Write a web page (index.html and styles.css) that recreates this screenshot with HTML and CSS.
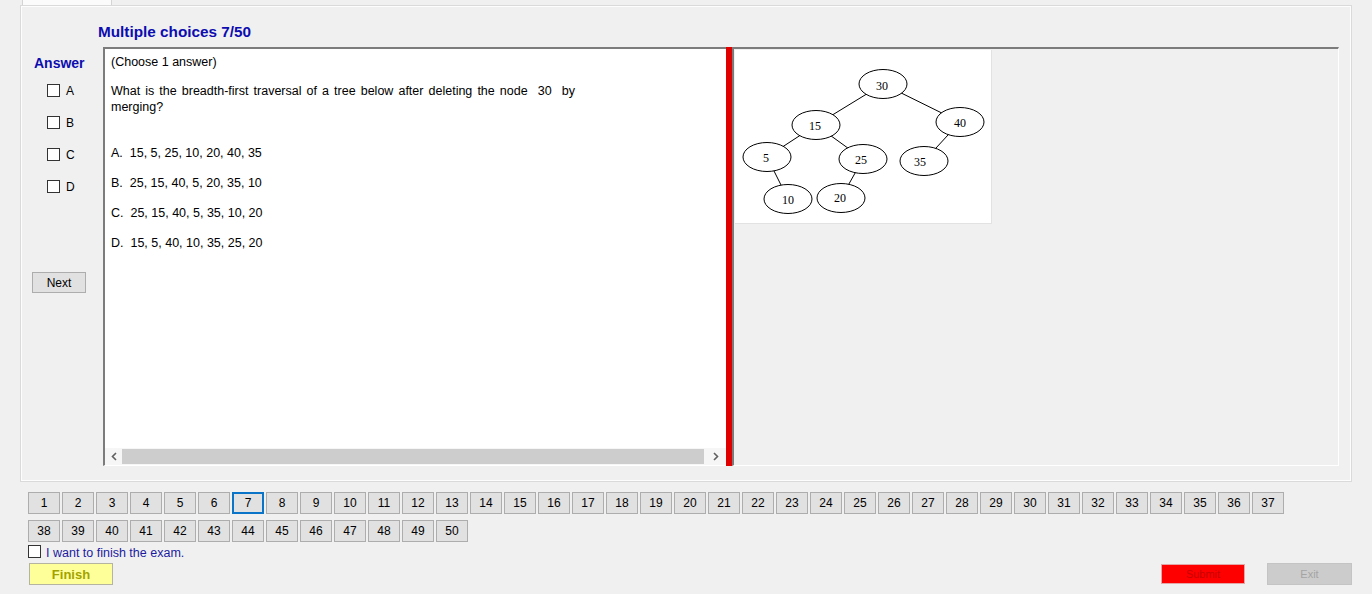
FILE: index.html
```html
<!DOCTYPE html>
<html>
<head>
<meta charset="utf-8">
<link rel="stylesheet" href="styles.css">
</head>
<body>
<div class="tabstrip"><div class="tab"></div></div>
<div class="tabpage">
  <div class="title">Multiple choices 7/50</div>
  <div class="main">
    <div class="answer-col">
      <div class="answer-label">Answer</div>
      <div class="opt first"><span class="cb"></span><span>A</span></div>
      <div class="opt"><span class="cb"></span><span>B</span></div>
      <div class="opt"><span class="cb"></span><span>C</span></div>
      <div class="opt"><span class="cb"></span><span>D</span></div>
      <div class="btn next">Next</div>
    </div>
    <div class="qbox">
      <div class="qtext">
        <div class="l choose">(Choose 1 answer)</div>
        <div class="l question">What is the breadth-first traversal of a tree below after deleting the node &nbsp;30 &nbsp;by<br>merging?</div>
        <div class="l ans">A.&nbsp; 15, 5, 25, 10, 20, 40, 35</div>
        <div class="l ans">B.&nbsp; 25, 15, 40, 5, 20, 35, 10</div>
        <div class="l ans">C.&nbsp; 25, 15, 40, 5, 35, 10, 20</div>
        <div class="l ans">D.&nbsp; 15, 5, 40, 10, 35, 25, 20</div>
      </div>
      <div class="hscroll">
        <div class="arrow"><svg width="8" height="9" viewBox="0 0 8 9"><path d="M6 1 L2.5 4.5 L6 8" fill="none" stroke="#606060" stroke-width="1.6"/></svg></div>
        <div class="thumb"></div>
        <div class="arrow right"><svg width="8" height="9" viewBox="0 0 8 9"><path d="M2 1 L5.5 4.5 L2 8" fill="none" stroke="#606060" stroke-width="1.6"/></svg></div>
      </div>
    </div>
    <div class="splitter"></div>
    <div class="imgpanel">
      <div class="tree">
        <svg width="257" height="174" viewBox="0 0 257 174">
          <g stroke="#000" stroke-width="1">
            <line x1="148" y1="34" x2="81" y2="75"/>
            <line x1="148" y1="34" x2="225" y2="72"/>
            <line x1="81" y1="75" x2="32" y2="107"/>
            <line x1="81" y1="75" x2="128" y2="109"/>
            <line x1="225" y1="72" x2="189" y2="111"/>
            <line x1="32" y1="107" x2="53" y2="149"/>
            <line x1="128" y1="109" x2="106" y2="148"/>
          </g>
          <g fill="#fff" stroke="#000" stroke-width="1">
            <ellipse cx="148" cy="34" rx="24" ry="14.5"/>
            <ellipse cx="81" cy="75" rx="24" ry="14.5"/>
            <ellipse cx="225" cy="72" rx="24" ry="14.5"/>
            <ellipse cx="32" cy="107" rx="24" ry="14.5"/>
            <ellipse cx="128" cy="109" rx="24" ry="14.5"/>
            <ellipse cx="189" cy="111" rx="24" ry="14.5"/>
            <ellipse cx="53" cy="149" rx="24" ry="14.5"/>
            <ellipse cx="106" cy="148" rx="24" ry="14.5"/>
          </g>
          <g class="tlabels" text-anchor="middle">
            <text x="147" y="40">30</text>
            <text x="80" y="80">15</text>
            <text x="225" y="77">40</text>
            <text x="31" y="112">5</text>
            <text x="126" y="114">25</text>
            <text x="185" y="116">35</text>
            <text x="53" y="154">10</text>
            <text x="105" y="152">20</text>
          </g>
        </svg>
      </div>
    </div>
  </div>
</div>
<div class="nav">
  <div class="row">
    <div class="btn num">1</div><div class="btn num">2</div><div class="btn num">3</div><div class="btn num">4</div><div class="btn num">5</div><div class="btn num">6</div><div class="btn num current">7</div><div class="btn num">8</div><div class="btn num">9</div><div class="btn num">10</div><div class="btn num">11</div><div class="btn num">12</div><div class="btn num">13</div><div class="btn num">14</div><div class="btn num">15</div><div class="btn num">16</div><div class="btn num">17</div><div class="btn num">18</div><div class="btn num">19</div><div class="btn num">20</div><div class="btn num">21</div><div class="btn num">22</div><div class="btn num">23</div><div class="btn num">24</div><div class="btn num">25</div><div class="btn num">26</div><div class="btn num">27</div><div class="btn num">28</div><div class="btn num">29</div><div class="btn num">30</div><div class="btn num">31</div><div class="btn num">32</div><div class="btn num">33</div><div class="btn num">34</div><div class="btn num">35</div><div class="btn num">36</div><div class="btn num">37</div>
  </div>
  <div class="row">
    <div class="btn num">38</div><div class="btn num">39</div><div class="btn num">40</div><div class="btn num">41</div><div class="btn num">42</div><div class="btn num">43</div><div class="btn num">44</div><div class="btn num">45</div><div class="btn num">46</div><div class="btn num">47</div><div class="btn num">48</div><div class="btn num">49</div><div class="btn num">50</div>
  </div>
</div>
<div class="finish-check"><span class="cb"></span><span class="fc-text">I want to finish the exam.</span></div>
<div class="bottom">
  <div class="btn finish">Finish</div>
  <div class="right-btns">
    <div class="btn submit">Submit</div>
    <div class="btn exit">Exit</div>
  </div>
</div>
</body>
</html>
```

FILE: styles.css
```css
html, body {
  margin: 0;
  padding: 0;
}
body {
  width: 1372px;
  height: 594px;
  overflow: hidden;
  background: #f0f0f0;
  font-family: "Liberation Sans", Arial, sans-serif;
  font-size: 12px;
  color: #000;
}
.tabstrip {
  height: 5px;
  padding-left: 22px;
}
.tab {
  width: 88px;
  height: 5px;
  background: #fbfbfb;
  border-left: 1px solid #d4d4d4;
  border-right: 1px solid #d4d4d4;
}
.tabpage {
  box-sizing: border-box;
  margin-left: 20px;
  width: 1332px;
  height: 477px;
  border: 1px solid #dadada;
  box-shadow: inset 1px 1px 0 #fdfdfd, inset -1px -1px 0 #fdfdfd;
  background: #f0f0f0;
}
.title {
  margin-top: 17px;
  padding-left: 77px;
  height: 18px;
  line-height: 18px;
  font-size: 15.3px;
  font-weight: bold;
  color: #0c0cb0;
}
.main {
  margin-top: 6px;
  height: 419px;
  display: flex;
}
.answer-col {
  width: 82px;
  flex: none;
}
.answer-label {
  margin-top: 8px;
  margin-left: 13px;
  height: 16px;
  line-height: 16px;
  font-size: 14px;
  font-weight: bold;
  color: #0c0cb0;
}
.opt {
  display: flex;
  align-items: center;
  margin-left: 26px;
  margin-top: 19px;
  height: 13px;
  line-height: 13px;
  font-size: 12px;
}
.opt span:last-child {
  padding-top: 1px;
}
.opt.first {
  margin-top: 13px;
}
.cb {
  box-sizing: border-box;
  width: 13px;
  height: 13px;
  border: 1px solid #333;
  background: #fff;
  flex: none;
  margin-right: 6px;
}
.btn {
  box-sizing: border-box;
  background: #e1e1e1;
  border: 1px solid #adadad;
  display: flex;
  align-items: center;
  justify-content: center;
  font-size: 12px;
}
.next {
  margin-top: 79px;
  margin-left: 11px;
  width: 54px;
  height: 21px;
}
.qbox {
  box-sizing: border-box;
  width: 623px;
  flex: none;
  background: #fff;
  border-top: 2px solid #7c7c7c;
  border-left: 2px solid #7c7c7c;
  border-bottom: 1px solid #fff;
  display: flex;
  flex-direction: column;
}
.qtext {
  flex: 1;
  padding-top: 5px;
  padding-left: 6px;
  font-size: 12.5px;
}
.l {
  line-height: 16px;
  white-space: nowrap;
}
.question {
  margin-top: 13px;
  word-spacing: 1.6px;
}
.ans {
  margin-top: 14px;
}
.question + .ans {
  margin-top: 30px;
}
.hscroll {
  height: 17px;
  display: flex;
  align-items: stretch;
  background: #f6f6f6;
}
.arrow {
  width: 17px;
  display: flex;
  align-items: center;
  justify-content: center;
}
.arrow.right {
  margin-left: 3px;
}
.thumb {
  width: 582px;
  margin: 1px 0;
  background: #cdcdcd;
}
.splitter {
  width: 6px;
  flex: none;
  background: #e00000;
}
.imgpanel {
  box-sizing: border-box;
  width: 607px;
  flex: none;
  border-top: 2px solid #7c7c7c;
  border-left: 2px solid #7c7c7c;
  border-right: 1px solid #fff;
  border-bottom: 1px solid #fff;
  padding: 1px 0 0 1px;
}
.tree {
  box-sizing: border-box;
  width: 257px;
  height: 174px;
  background: #fff;
  border-right: 1px solid #e2e2e2;
  border-bottom: 1px solid #e2e2e2;
}
.tree svg {
  display: block;
}
.tlabels {
  font-family: "Liberation Serif", "Times New Roman", serif;
  font-size: 12px;
}
.nav {
  margin-top: 10px;
  padding-left: 28px;
  display: flex;
  flex-direction: column;
  gap: 6px;
}
.row {
  display: flex;
  gap: 2px;
}
.num {
  width: 32px;
  height: 22px;
}
.num.current {
  border: 2px solid #0a74c9;
}
.finish-check {
  margin-top: 2px;
  padding-left: 28px;
  height: 14px;
  display: flex;
  align-items: center;
}
.finish-check .cb {
  margin-right: 5px;
}
.fc-text {
  color: #1c1ca0;
  font-size: 12.5px;
  padding-top: 3px;
}
.bottom {
  margin-top: 5px;
  padding-left: 29px;
  padding-right: 20px;
  display: flex;
  justify-content: space-between;
  align-items: flex-start;
}
.finish {
  width: 84px;
  height: 22px;
  background: #ffff99;
  border: 1px solid #b4b4a0;
  color: #a3a300;
  font-weight: bold;
  font-size: 13px;
  padding-top: 1px;
}
.right-btns {
  display: flex;
  align-items: center;
  gap: 22px;
}
.submit {
  width: 84px;
  height: 20px;
  background: #ff0000;
  border: 1px solid #e4a6a6;
  color: #c80000;
  font-size: 11px;
}
.exit {
  width: 85px;
  height: 22px;
  background: #cccccc;
  border: 1px solid #c4c4c4;
  color: #a4a4a4;
  font-size: 11px;
}
```
